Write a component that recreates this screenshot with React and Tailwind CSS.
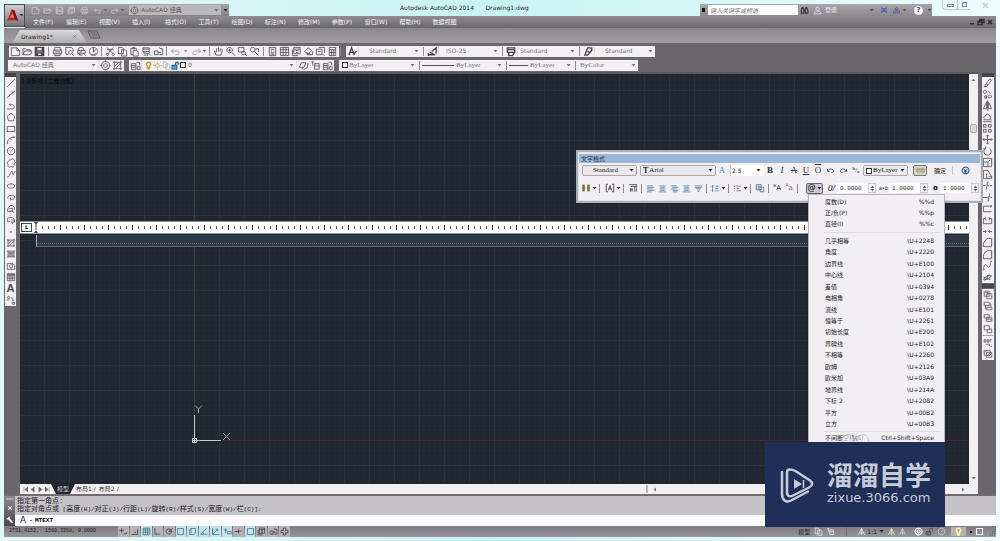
import React, { useState } from 'react';

// Line drawings on a 12 x 12 grid
const GLYPHS = {
  new: 'M1.5 2h6l3 3v5.5h-9zM7.5 2v3h3',
  open: 'M1 9.5V3h3l1 1h4v1.5M1 9.5l2-4h8l-2 4z',
  save: 'M1.5 1.5h9v9h-9zM3 2v3.500h6V2M3.500 10V7.500h5V10M2.200 2v8M9.800 2v8',
  print: 'M3 4.500V1.500h6v3M1.500 4.500h9v4h-9zM3 8.500v2h6v-2M3 6.500h6',
  preview: 'M2 9V1.500h6l2 2V6M2 9h3M7 5a2 2 0 1 0 .1 0M8.500 8.500l2 2',
  publish: 'M2 5a3.500 3.500 0 0 1 7 0M2 5h8v3H2zM4 8v2h3M8 8l2.500 2.500M3.500 6.500h3',
  globe: 'M6 1.500a4.500 4.500 0 1 0 .1 0M6 1.500v5l3-3M3 8.500c2 1 4 1 6 0',
  cut: 'M2 1.500l7 7M9 1.500l-6 7M2.500 8a1.200 1.200 0 1 0 .1 0M9 8a1.200 1.200 0 1 0 .1 0M2 4h7',
  copy: 'M1.500 1.500h4l1.500 1.500v5.500h-5.500zM5 4h4l1.500 1.500v5.500H5z',
  paste: 'M2 2.500h6v2M2 2.500v7h2.500M4 1.500h2v1.500H4zM4.500 5h4l1.500 1.500v4.500h-5.500z',
  brush: 'M2 2h7v4H2zM3 6v2h6V6M2 3.500h7M7 8v3M9 8.500l2 2M3 10h3',
  block: 'M1.500 5.500h4v4h-4zM7 3h3.500v6.500H7M5.500 7h3M7 1.500l1.500 1.500',
  undo: 'M4 3L1.500 5.500 4 8M1.500 5.500H8a2 2 0 0 1 0 4H6',
  redo: 'M8 3l2.500 2.500L8 8M10.500 5.500H4a2 2 0 0 0 0 4h2',
  pan: 'M3 6.500L1.500 5.500l2 4.500h5L10 6V3.500M4 7V2.500M6 6V1.500M8 6V2.500',
  zoom: 'M5 1.500a3 3 0 1 0 .1 0M7.200 6.700l3.500 3.800M3.500 4.500h3M5 3v3',
  zoomWin: 'M1.500 1.500h6v5h-6zM7 5.500a2 2 0 1 0 .1 0M8.500 8.500l2 2',
  zoomPrev: 'M4 1.500a2.500 2.500 0 1 0 .1 0M6 6l4.500 4.500M7 3h3.500v3.500',
  props: 'M2.500 1.500h7v9h-7zM4 3.500h4M4 5.500h1.500M7 5.500h1M4 7.500h4M4 9h4',
  grid: 'M1.500 1.500h9v9h-9zM1.500 4h9M4.500 1.500v9M7.500 1.500v9M1.500 7h9',
  palette: 'M3 1.500h7v7H3zM3 3.500h7M1.500 4v6.500h6M5 5h3M5 7h3',
  sheets: 'M1.500 6l4-4 4 3-4 4zM4 9.500h6.500V6M3 7.500l5 1',
  markup: 'M1.500 3.500h6v6h-6zM4 1.500h6.500v6M3 6h3M8 9l2.500 1.500',
  calc: 'M2.500 1.500h7v9h-7zM2.500 4h7M5 4v6.500M7.200 4v6.500M2.500 7h7',
  help: 'M1.500 1.500h9v9h-9zM4.500 4.500c0-2 3.500-2 3 0L6 6v1M6 8.500v1',
  gear: 'M6 1.500a4.500 4.500 0 1 0 .1 0M6 4a2 2 0 1 0 .1 0M6 .5V2M6 10v1.500M.5 6H2M10 6h1.500',
  layers: 'M1.500 4h5v6.500h-5zM1.500 6h5M1.500 8h5M7 2.500h3.500v3M8 7h3v3.500H8z',
  layerA: 'M1.500 8l2-5h5l-2 5zM4 10l2-1M6 10.500l4-2 1-5',
  layerB: 'M1.500 2h3M3 2v4M5 4h5v6H5zM5 6.500h5',
  text: 'M2 10L5 2l3 8M3 7h4M7 9l3.500-3.500',
  dim: 'M1 9.500h8M3 7l4 1.500M5 6l5-4v6.500M1.500 8v3',
  tableStyle: 'M1.500 2h8v5h-8zM1.500 4h8M3 7v3.500h4L9.500 7',
  leader: 'M2 10l3-8h4.500v3L5 10zM5 5.500l2 1.500',
  line: 'M1.500 10.500l9-9',
  xline: 'M1 10.500L11 2M4 6.500v2.500M7.500 3v2.500',
  pline: 'M1.500 9.500h3M4.500 9.500h3a2.500 2.500 0 0 0 0-5H4M5.500 3L4 4.500 5.500 6',
  polygon: 'M6 1.500l4.500 3.500-1.500 5.500H3L1.500 5z',
  rect: 'M1.500 3h9v6h-9zM1 9h1.500M9.500 3h1.500',
  arc: 'M1.500 10.500c0-5 3.500-8 9-8M1.500 9v2M5 4.500l1.500 1M9.500 1.500v2',
  circle: 'M6 1.500a4.500 4.500 0 1 0 .1 0M5.500 6h1M6.500 5.500L8.500 4',
  cloud: 'M3 4a2 2 0 0 1 3-1.500 2 2 0 0 1 4 1.500 1.800 1.800 0 0 1-.5 3.500 2 2 0 0 1-3.500 2.500A2 2 0 0 1 2.500 8 2.200 2.200 0 0 1 3 4z',
  spline: 'M1 9.500c2 1 3-1 4-4s3-4 3-1 1 3 3-2',
  ellipse: 'M6 3.500c6 0 6 5 0 5s-6-5 0-5M6 2.500v2M1 6h1.500M9.500 6H11',
  earc: 'M2.500 8c-2-4 7-6 8-2 .5 2.500-3 3-5 2.500M5.500 7v3',
  insert: 'M2 9V6l3-4h3l2 2v3M2 9h4M4 5.500h4v3H4M7 8l3 3',
  makeBlock: 'M2 8V4l2-1h4l2 2v3M2 8h3M6 6h4v2.500H6M8 9v2',
  point: 'M5 6h2M6 5v2',
  hatch: 'M2.500 2.500h7v7h-7zM1 2.500h1.500V1M9.500 1v1.500H11M1 9.500h1.500V11M9.500 11V9.500H11M3 7l4-4M4 9l5-5',
  gradient: 'M2.500 2.500h7v7h-7zM1 2.500h1.500M9.500 2.500H11M1 9.500h1.500M9.500 9.500H11M3 4h6M3 5.500h6M3 7h6M3 8.500h6',
  region: 'M1.500 3h5l4 2v5h-9zM6 4.500a2 2 0 1 0 .1 0M8 2v2',
  table: 'M1.500 2h9v8.500h-9zM1.500 4h9M1.500 3h9M4.500 4v6.500M7.500 4v6.500M1.500 6h9M1.500 8h9',
  addSel: 'M3 1.500a1.500 1.500 0 1 0 .1 0M1 6h3M6 3.500c3 0 2.500 2 2.500 3M7 6l1.500 1.500L10 6M7.500 9h3v2h-3z',
  erase: 'M2 10.500h3M3.500 8.500l5-6.500 2 1.500-5 6.500-2.500.5zM4.500 7.500l2 1.500',
  copyObj: 'M3 1.500a1.700 1.700 0 1 0 .1 0M8.500 6.500a1.700 1.700 0 1 0 .1 0M6 3c2 0 3 1 3 2M3 7.500h2v2.500H3z',
  mirror: 'M5 2v7.500H1.500zM7 2v7.500h3.500zM6 .5v11',
  offset: 'M1.500 8.500h9M3 7C1 6.500 2.500 4 4 4.500 4 1.500 8.500 1.500 8 4.500c2 0 2.500 2.500.5 2.500M1.500 10.500h9',
  array: 'M1.500 1.500h3v3h-3zM7 1.500h3v3H7zM1.500 7h3v3h-3zM7 7h3v3H7z',
  move: 'M6 1v10M1 6h10M4.500 2.500L6 1l1.500 1.500M4.500 9.500L6 11l1.500-1.500M2.500 4.500L1 6l1.500 1.500M9.500 4.500L11 6 9.500 7.500',
  rotate: 'M4 2.500a4 4 0 1 0 4.500.3M4 .5v2.500H1.500',
  scale: 'M1.500 1.500h9v9h-9zM1.500 5.500h5v5M7 5l2-2',
  stretch: 'M1.500 1.500h5l4 7v2h-9zM5 5v5.500M7 8.500h4',
  trim: 'M1 6h3M6 6h1.500M9 6h2M6.500 1.500L4.500 10.500',
  extend: 'M1 6h6M8.500 1.500l-2 9M9 6h2',
  breakPt: 'M1.500 9.500v-6h9M1.500 9.500h9M9.500 2l1 1.500-1 1.500',
  breakTwo: 'M1.500 4v5.500h9V4M1.500 4H4M8 4h2.500M4 2.500v3M8 2.500v3',
  join: 'M1 6h3.500M7.500 6H11M3.500 4.500L5 6 3.500 7.500M8.500 4.500L7 6l1.500 1.500',
  chamfer: 'M1.500 10.500V6.500l4-5h5v9z',
  fillet: 'M1.500 10.500V8a7 7 0 0 1 6.500-6.500h2.500v9z',
  blend: 'M1.500 9.500c1-6 3-5 4-3s3 3 4-4M1 10.500h2M9 1.500h2',
  explode: 'M1.500 8l4-4h5l-4 4zM3 9.500L8 2.500M1.500 5.500l8 3',
  front: 'M1.500 1.500h6v6h-6zM4.500 4.500h6v6h-6zM3 3h3v3',
  back: 'M1.500 1.500h6v4h-6zM4.500 7.500h6v3h-6zM3 5.500v4h1.500M7.500 3.500h2v4',
  above: 'M1.500 2h6v4h-6zM4 5h6.500v5H4zM4 7.500h6',
  under: 'M1.500 2h6v5h-6zM5 7v3.500h5.500V6H7.500',
  abc: 'M1.500 2h2v3h-2zM5 2h2v3H5zM8.500 2h2M8.500 2v3M3 7.500h5v2M7 8.500l1.500 1.500M9 10h2',
  hatchBack: 'M1.500 1.500h7v6h-7zM4 4h6.500v6H4zM2 4l3-2.500M5 8l4-4M6.500 9l3.500-3.500',
  columns: 'M2 2v8M4 2v8M8 2v8M10 2v8M2 6h3M7 6h3M3 2v8M9 2v8',
  justify: 'M1.500 1.500h2M8.500 1.500h2M1.500 1.500v9M10.500 1.500v9M1.500 10.500h2M8.500 10.500h2M4 9l2-6 2 6M4.500 7h3',
  para: 'M1.500 2h9M3 4h7M3 6v4.500M5 6v4.500M8 4v6.500M10 2v8.500M5 8H3',
  left: 'M1 2.500h8M2 4.500h9M1 6.500h8M2 8.500h9M1 10.500h7',
  center: 'M2 2.500h8M3 4.500h6M2 6.500h8M3 8.500h6M1 10.500h10',
  right: 'M1 2.500h8M3 4.500h8M1 6.500h8M3 8.500h8M4 10.500h6',
  spread: 'M1 2.500h10M1 4.500h10M3 6h6M4 8h4M5 10h2',
  spacing: 'M2 2v8M1 3.500L2 2l1 1.500M1 8.500L2 10l1-1.500M5 3h6M5 6h5M5 9h6',
  number: 'M2 2v2M1.500 6h1M1.500 9h1M4.500 3h6M4.500 6h4M4.500 9h6',
  field: 'M1.500 2h6v6h-6zM3 4h3M3 6h3M6 5h4.500v5.500H6z',
  undoCurl: 'M2 4v3h3M2 7c3-5 8-3 8 0 0 1.500-2 2-3 1.500',
  redoCurl: 'M10 4v3H7M10 7c-3-5-8-3-8 0 0 1.500 2 2 3 1.500',
  ruler: 'M1 4h10v4H1zM3 4v2M5 4v2M7 4v2M9 4v2',
  more: 'M6 1.500a4.500 4.500 0 1 0 .1 0M3.500 4.500L6 6.500l2.500-2M4.500 7L6 8.500 7.500 7',
  plus: 'M3.500 1.500v6M.5 4.500h6M6 9h4M10 7v2',
  snap: 'M2 10h8V3M5 7h3',
  ortho: 'M2.500 1.500v8h7',
  polar: 'M5 2.500a3.500 3.500 0 1 0 .1 0M5 6l5-4M5 6h5',
  osnap: 'M2 2h8v8H2z',
  osnap3: 'M2 10V4l2-2h6v6l-2 2zM4 2v6',
  angle: 'M10 2L2 9.500h9M5 6.500c1 1 1.500 2 1 3',
  ducs: 'M2 1.500v8.500h9M2 10l7-7M6 3h3v3',
  dyn: 'M1 4h5M3.500 2v6M6 6h5v3H6z',
  lwt: 'M1 6h5M6 3v6M6 5.500h4',
  person: 'M6 1.500a2.200 2.200 0 1 0 .1 0M1.500 10.500c0-5 9-5 9 0z',
  binoc: 'M2 9.500h3v-4L4 2H3L1.500 6zM7 9.500h3.500V6L9 2H8L7 5.500zM5 5.500h2',
  bulb: 'M6 1.500a3 3 0 0 0-1.500 5.500v2h3V7A3 3 0 0 0 6 1.500M4.500 10.500h3',
  sun: 'M6 3.500a2.500 2.500 0 1 0 .1 0M6 .5V2M6 10v1.500M.5 6H2M10 6h1.500M2 2l1 1M9 9l1 1M10 2L9 3M3 9l-1 1',
  lock: 'M1.500 6h6v4.500h-6zM6 6V3.500a2 2 0 0 1 4 0V5M3 8h3',
  cross: 'M2 2l8 8M10 2l-8 8',
  min: 'M2 9h8M2 10h8',
  restore: 'M1.500 5h6v5h-6zM4 5V2h6.500v5h-3M4 3h6M1.500 6h6',
  exchange: 'M2 2l8 8M10 2l-8 8M2 4h8M2 8h8M3 2v8M9 2v8',
  share: 'M6 1.500l2.500 3h-5zM2 6.500h3v3H2zM7 6.500h3v3H7zM6 4v3',
  annot: 'M2 10.500L6 2l4 8.500M6 2v9M3.500 8h5',
  bigPlus: 'M4.500 1.500h3v3h3v3h-3v3h-3v-3h-3v-3h3z',
};

function Icon({ name, className = 'size-[11px]', width = 1 }) {
  return (
    <svg viewBox="0 0 12 12" fill="none" stroke="currentColor" strokeWidth={width} className={`block shrink-0 ${className}`} aria-hidden="true">
      <path d={GLYPHS[name]} />
    </svg>
  );
}

function Caret({ className = 'text-[#77757a]' }) {
  return (
    <svg viewBox="0 0 5 3" className={`block h-[3px] w-[5px] shrink-0 ${className}`} aria-hidden="true">
      <path d="M.5 0h4l-2 2.500z" fill="currentColor" />
    </svg>
  );
}

function Tool({ name, className = 'w-3 text-[#5b595e]', icon, width }) {
  return (
    <button type="button" aria-label={name} className={`flex shrink-0 items-center justify-center ${className}`}>
      <Icon name={name} className={icon} width={width} />
    </button>
  );
}

function Sep() {
  return <span className="mx-[2px] h-[9px] w-px shrink-0 bg-[#8d8b90]" />;
}

function Combo({ label, options, className = '', pad = 'pl-[10px]', caret, children }) {
  return (
    <div className={`relative flex shrink-0 items-center ${className}`}>
      {children}
      <select aria-label={label} className={`h-full w-full min-w-0 appearance-none bg-transparent leading-none outline-none ${pad}`}>
        {options.map((o) => <option key={o}>{o}</option>)}
      </select>
      <span className="pointer-events-none absolute right-[2px]"><Caret className={caret} /></span>
    </div>
  );
}

const MENUS = ['文件(F)', '编辑(E)', '视图(V)', '插入(I)', '格式(O)', '工具(T)', '绘图(D)', '标注(N)', '修改(M)', '参数(P)', '窗口(W)', '帮助(H)', '数据视图'];

const DRAW = ['line', 'xline', 'pline', 'polygon', 'rect', 'arc', 'circle', 'cloud', 'spline', 'ellipse', 'earc', 'insert', 'makeBlock', 'point', 'hatch', 'gradient', 'region', 'table', 'A', 'addSel'];
const MODIFY = ['erase', 'copyObj', 'mirror', 'offset', 'array', 'move', 'rotate', 'scale', 'stretch', 'trim', 'extend', 'breakPt', 'breakTwo', 'join', 'chamfer', 'fillet', 'blend', 'explode'];

const SYMBOLS_TOP = [['度数(D)', '%%d'], ['正/负(P)', '%%p'], ['直径(I)', '%%c']];
const SYMBOLS = [
  ['几乎相等', '\\U+2248'],
  ['角度', '\\U+2220'],
  ['边界线', '\\U+E100'],
  ['中心线', '\\U+2104'],
  ['差值', '\\U+0394'],
  ['电相角', '\\U+0278'],
  ['流线', '\\U+E101'],
  ['恒等于', '\\U+2261'],
  ['初始长度', '\\U+E200'],
  ['界碑线', '\\U+E102'],
  ['不相等', '\\U+2260'],
  ['欧姆', '\\U+2126'],
  ['欧米加', '\\U+03A9'],
  ['地界线', '\\U+214A'],
  ['下标 2', '\\U+2082'],
  ['平方', '\\U+00B2'],
  ['立方', '\\U+00B3'],
];

const PROMPT = [['高度', '(H)/'], ['对正', '(J)/'], ['行距', '(L)/'], ['旋转', '(R)/'], ['样式', '(S)/'], ['宽度', '(W)/'], ['栏', '(C)]:']];

const STATUS = [
  ['plus', false], ['snap', false], ['grid', true], ['ortho', false], ['polar', false],
  ['osnap', true], ['osnap3', true], ['angle', true], ['ducs', true], ['dyn', true],
  ['lwt', false], ['osnap', true], ['palette', false], ['block', false], ['bigPlus', false],
];

function TitleBar() {
  return (
    <header className="flex h-7 shrink-0">
      <button type="button" aria-label="应用程序菜单" className="mt-1 flex h-[23px] w-[21px] shrink-0 items-center border border-[#4a4a4c] bg-linear-to-b from-[#d0cfd2] to-[#77767a]">
        <svg viewBox="0 0 14 16" className="ml-px h-4 w-[14px]" aria-hidden="true">
          <path d="M1 14L6 1l3 1 4 11-4-1-3 1-2-1z" fill="#c0251f" />
          <path d="M6 1l3 1 4 11-3-1z" fill="#7d100f" />
          <path d="M4 10l3-5 1.500 5z" fill="#e8807a" />
        </svg>
        <Caret className="text-[#333]" />
      </button>
      <div className="flex min-w-0 flex-1 flex-col">
        <div className="flex h-4 shrink-0 items-start">
          <div className="mt-1 flex h-3 w-[204px] shrink-0 items-center bg-linear-to-b from-[#a5a3a7] to-[#848286] pl-1 text-[#c9c8cc]">
            <Tool name="new" className="w-3" icon="size-[9px]" />
            <Tool name="open" className="w-3" icon="size-[9px]" />
            <Tool name="save" className="w-3" icon="size-[9px]" />
            <Tool name="palette" className="w-3" icon="size-[9px]" />
            <Tool name="print" className="w-[14px]" icon="size-[9px]" />
            <Tool name="undo" className="w-3" icon="size-[9px]" />
            <Caret className="text-[#68666a]" />
            <Tool name="redo" className="w-3" icon="size-[9px]" />
            <Caret className="text-[#68666a]" />
            <Combo label="工作空间" options={['AutoCAD 经典']} pad="pl-[2px]" className="ml-[4px] h-[10px] w-[92px] bg-[#bab8bc] pl-px text-[#5b595d]">
              <Icon name="gear" className="size-[9px]" />
            </Combo>
            <span className="ml-[2px]"><Caret className="text-[#222]" /></span>
          </div>
          <h1 className="flex-1 pt-1 pl-[171px] text-[6px] leading-[8px] font-normal whitespace-pre text-[#1b2a2c]">Autodesk AutoCAD 2014      Drawing1.dwg</h1>
          <div className="mt-1 flex h-3 w-[232px] shrink-0 items-center bg-linear-to-b from-[#a9a7ab] to-[#8b898d] pl-[2px] text-[#4d4b50]">
            <span className="mr-[3px] h-[4px] w-[3px] bg-[#111]" />
            <input aria-label="搜索" placeholder="键入关键字或短语" className="h-[10px] w-[92px] bg-[#fbfafb] px-[2px] text-[6px] italic outline-none placeholder:text-[#77757a]" />
            <Tool name="binoc" className="ml-px w-3 text-[#39373b]" icon="size-[9px]" width={1.5} />
            <Tool name="person" className="w-[14px] text-[#eeedf0]" icon="size-[9px]" />
            <a href="#login" className="shrink-0 text-[6px] leading-none whitespace-nowrap text-[#e9e8eb]">登录</a>
            <span className="ml-[32px]"><Caret className="text-[#555358]" /></span>
            <Tool name="exchange" className="ml-1 w-3 text-[#4353a0]" icon="size-[8px]" />
            <Tool name="share" className="w-3 text-[#4d5c9c]" icon="size-[9px]" />
            <Caret className="text-[#555358]" />
            <span className="ml-[7px] flex size-[9px] shrink-0 items-center justify-center rounded-full bg-[#f4f6fb] text-[7px] leading-none font-bold text-[#3a4b78]">?</span>
            <span className="ml-1"><Caret className="text-[#555358]" /></span>
          </div>
          <div className="ml-[10px] flex h-[10px] w-[54px] shrink-0 items-center rounded-b-sm text-[#8997a0]">
            <button type="button" aria-label="最小化" className="flex h-full w-4 items-end justify-center rounded-bl-sm border border-t-0 border-[#b4cdd1] pb-[2px]"><span className="h-[3px] w-[7px] border border-[#7b8a92]" /></button>
            <button type="button" aria-label="最大化" className="flex h-full w-3 items-center justify-center border-b border-[#b4cdd1]"><span className="size-[5px] border border-[#7b8a92]" /></button>
            <button type="button" aria-label="关闭" className="ml-3 text-[#c2d6ea]"><Icon name="cross" className="size-[7px]" width={3} /></button>
          </div>
        </div>
        <nav className="flex h-3 min-w-0 items-center gap-[12px] bg-linear-to-b from-[#8f8d91] to-[#6a686c] pr-[2px] pl-[8px]">
          {MENUS.map((m) => (
            <a key={m} href="#menu" className="min-w-[21px] shrink-0 text-[6px] leading-none text-[#f6f5f8]">{m}</a>
          ))}
          <div className="ml-auto flex text-[#2f2d31]">
            <Tool name="min" className="w-2" icon="size-[6px]" width={2} />
            <Tool name="restore" className="w-[10px]" icon="size-[8px]" width={2} />
            <Tool name="cross" className="w-2" icon="size-[6px]" width={3} />
          </div>
        </nav>
      </div>
    </header>
  );
}

function FileTabs() {
  return (
    <div className="flex h-[15px] shrink-0 items-end bg-linear-to-b from-[#8b898d] to-[#a09ea2] pl-2">
      <div className="flex h-[13px] w-[75px] items-center justify-between bg-linear-to-b from-[#d9d8db] to-[#b0aeb2] pr-[10px] pl-[9px] [clip-path:polygon(8px_0,67px_0,100%_100%,0_100%)]">
        <span className="text-[6px] leading-none text-[#1e1d20]">Drawing1*</span>
        <button type="button" aria-label="关闭图形" className="text-[#8a888c]"><Icon name="cross" className="size-[5px]" width={2} /></button>
      </div>
      <svg viewBox="0 0 14 9" className="mb-1 h-[9px] w-[14px]" aria-hidden="true">
        <path d="M1 1h9l3 7H4z" fill="#89878b" stroke="#5f5d61" />
        <path d="M4 3h4M5 5h5" stroke="#6a686c" />
      </svg>
    </div>
  );
}

function Toolbars() {
  const bar = 'flex shrink-0 items-center bg-[#f2f0f3] text-[6px] text-[#77757a]';
  const thick = 'w-3 text-[#48464b]';
  return (
    <div className="shrink-0 bg-[#6a686b] pt-px text-[6px]">
      <div className="flex h-[14px] items-center gap-[7px] pl-[5px]">
        <div className={`${bar} h-[11px] w-[330px]`}>
          <Tool name="new" /><Tool name="open" /><Tool name="save" width={1.5} className="w-[13px] text-[#48464b]" /><Sep />
          <Tool name="print" /><Tool name="preview" /><Tool name="publish" /><Tool name="globe" /><Sep />
          <Tool name="cut" /><Tool name="copy" /><Tool name="paste" /><Tool name="brush" /><Tool name="block" /><Sep />
          <Tool name="undo" className="w-3 text-[#a09ea3]" /><Caret className="mx-[2px] text-[#a09ea3]" />
          <Tool name="redo" className="w-3 text-[#a09ea3]" /><Caret className="text-[#777]" /><Sep />
          <Tool name="pan" /><Tool name="zoom" /><Tool name="zoomWin" /><Tool name="zoomPrev" className="w-[13px] text-[#5b595e]" /><Sep />
          <Tool name="props" /><Tool name="grid" /><Tool name="palette" /><Tool name="sheets" /><Tool name="markup" /><Tool name="calc" /><Sep />
          <Tool name="help" />
        </div>
        <div className={`${bar} h-[11px]`}>
          <Tool name="text" width={1.5} className={thick} />
          <Combo label="文字样式" options={['Standard']} className="h-full w-[63px] border-l border-[#dcdadd]" />
          <Sep />
          <Tool name="dim" width={1.5} className={thick} />
          <Combo label="标注样式" options={['ISO-25']} pad="pl-[7px]" className="h-full w-[62px] border-l border-[#dcdadd]" />
          <Sep />
          <Tool name="tableStyle" width={1.5} className={thick} />
          <Combo label="表格样式" options={['Standard']} pad="pl-[2px]" className="h-full w-[60px] border-l border-[#dcdadd]" />
          <Sep />
          <Tool name="leader" width={1.5} className={thick} />
          <Combo label="多重引线样式" options={['Standard']} className="h-full w-[61px] border-l border-[#dcdadd]" />
        </div>
      </div>
      <div className="flex h-[14px] items-center gap-[5px] pl-1">
        <div className={`${bar} h-[11px] w-[116px] pr-[2px]`}>
          <Combo label="工作空间列表" options={['AutoCAD 经典']} pad="pl-[5px]" className="h-full w-[91px] border-r border-[#dcdadd]" />
          <Tool name="gear" /><Tool name="hatch" />
        </div>
        <div className={`${bar} h-[11px] w-[205px]`}>
          <Tool name="layers" />
          <Combo label="图层" options={['0']} pad="pl-[2px]" className="h-full w-[156px] border-x border-[#dcdadd] pl-[2px] text-[#555]">
            <Icon name="bulb" className="size-[9px] text-[#c49f2b]" width={2} />
            <Icon name="sun" className="size-[9px] text-[#b39a4e]" />
            <Icon name="copy" className="size-[9px] text-[#b3b1b5]" />
            <Icon name="lock" className="size-[9px] text-[#2f6f9e]" width={2} />
            <span className="size-[6px] shrink-0 border border-[#333]" />
          </Combo>
          <Tool name="layerA" /><Tool name="layerB" /><Tool name="layers" />
        </div>
        <div className={`${bar} h-[11px] font-['Liberation_Serif',serif] text-[7px]`}>
          <Combo label="颜色" options={['ByLayer']} pad="pl-px" className="h-full w-[78px] pl-[3px]">
            <span className="size-[6px] shrink-0 border border-[#333]" />
          </Combo>
          <Sep />
          <Combo label="线型" options={['ByLayer']} pad="pl-[2px]" className="h-full w-[82px]">
            <span className="h-px w-8 shrink-0 bg-[#555]" />
          </Combo>
          <Sep />
          <Combo label="线宽" options={['ByLayer']} pad="pl-[2px]" className="h-full w-16">
            <span className="h-px w-[19px] shrink-0 bg-[#555]" />
          </Combo>
          <Sep />
          <Combo label="打印样式" options={['ByColor']} pad="pl-[2px]" className="h-full w-[60px]" />
        </div>
      </div>
    </div>
  );
}

function Canvas() {
  return (
    <div className="relative min-w-0 flex-1 overflow-hidden bg-[#212631]">
      <svg className="absolute inset-0 size-full" aria-hidden="true">
        <defs>
          <pattern id="grid" x="24" y="16" width="25" height="25" patternUnits="userSpaceOnUse">
            <path d="M5.500 0v25M10.500 0v25M15.500 0v25M20.500 0v25M0 5.500h25M0 10.500h25M0 15.500h25M0 20.500h25" stroke="#242a35" />
            <path d="M.5 0v25M0 .5h25" stroke="#29323c" />
          </pattern>
        </defs>
        <rect width="100%" height="100%" fill="url(#grid)" />
        <path d="M174.500 0v342" stroke="#2b4a3e" />
        <path d="M200 366.500h2000" stroke="#432832" />
        <g stroke="#c3c6ca" fill="none">
          <path d="M174.500 341v28M172 366.500h29" />
          <rect x="172.500" y="364.500" width="4" height="4" />
          <path d="M175 331.500l3.500 3.500 3.500-3.500M178.500 335v4M203 359l7 7M210 359l-7 7" stroke="#a9adb3" />
        </g>
      </svg>
      <p className="absolute top-[3px] left-[2px] text-[6px] leading-[8px] text-[#05070c]">[-][俯视][二维线框]</p>
      <div className="absolute inset-x-0 top-[147px] flex h-[13px] border-y border-[#8e9398] bg-white">
        <span className="m-px flex w-[11px] shrink-0 items-center justify-center border border-[#444] text-[5px] leading-none font-bold text-black">L</span>
        <svg viewBox="0 0 4 11" className="ml-px h-[11px] w-1 shrink-0" aria-hidden="true">
          <path d="M0 0h4L2 3zM0 11h4L2 8zM1.500 2h1v7h-1z" fill="#444" />
        </svg>
        <svg className="h-[11px] min-w-0 flex-1" aria-hidden="true">
          <defs>
            <pattern id="ticks" x="22" width="24" height="11" patternUnits="userSpaceOnUse">
              <path d="M.5 3v5" stroke="#222" />
              <path d="M6.500 4v3M12.500 4v3M18.500 4v3" stroke="#555" />
            </pattern>
          </defs>
          <rect width="100%" height="11" fill="url(#ticks)" />
        </svg>
      </div>
      <div className="absolute top-[161px] right-0 left-4 h-3 border-b border-l border-[#5d6268] border-l-[#a9adb3] bg-[#2c3845]">
        <div className="h-[9px] border-b border-dotted border-[#5f6a75]" />
      </div>
    </div>
  );
}

function Stepper({ label, value }) {
  return (
    <span className="flex items-center">
      <input aria-label={label} defaultValue={value} className="h-[10px] w-[31px] bg-white pl-[3px] font-['Liberation_Mono',monospace] text-[6px] text-[#222] outline-none" />
      <span className="flex h-[10px] w-2 flex-col items-center justify-around border border-[#c9c7cb] bg-[#f7f6f8]">
        <span className="rotate-180"><Caret className="text-[#666]" /></span>
        <Caret className="text-[#666]" />
      </span>
    </span>
  );
}

function SymbolRow({ item }) {
  return (
    <button type="button" className="flex items-center justify-between pr-[10px] pl-4 text-[6px] leading-none text-[#1c1b1e] hover:bg-[#d5e3f5]">
      <span>{item[0]}</span>
      <span>{item[1]}</span>
    </button>
  );
}

function SymbolMenu() {
  return (
    <div className="absolute top-[42px] left-[230px] w-[137px] border border-[#b9b7bb] bg-[#f1eff3] pt-px shadow-sm">
      <div className="grid h-[34px] auto-rows-fr">
        {SYMBOLS_TOP.map((s) => <SymbolRow key={s[1]} item={s} />)}
      </div>
      <hr className="my-[2px] mr-1 ml-[15px] border-[#dddbdf]" />
      <div className="grid h-[195px] auto-rows-fr">
        {SYMBOLS.map((s) => <SymbolRow key={s[1]} item={s} />)}
      </div>
      <hr className="mt-px mr-1 ml-[15px] border-[#dddbdf]" />
      <div className="relative grid h-3">
        <SymbolRow item={['不间断空格(S)', 'Ctrl+Shift+Space']} />
        <svg viewBox="0 0 30 12" className="pointer-events-none absolute top-0 left-8 h-3 w-[30px]" fill="#f6f5f8" fillOpacity=".6" stroke="#c5c3c8" aria-hidden="true">
          <circle cx="7" cy="8" r="5.500" />
          <circle cx="22" cy="8" r="5.500" />
        </svg>
      </div>
    </div>
  );
}

function TextFormat() {
  const [open, setOpen] = useState(true);
  const key = 'flex h-[11px] w-[12px] shrink-0 items-center justify-center font-["Liberation_Serif",serif] text-[9px] leading-none text-[#333]';
  const align = 'w-[12px] text-[#4a7ea6]';
  return (
    <section aria-label="文字格式" className="absolute top-[78px] right-[13px] z-10 h-[53px] w-[407px] border-2 border-[#a9b0b6] bg-[#f1eff3] shadow-[inset_0_0_0_1px_#dfe3e6]">
      <h2 className="mx-px mt-[2px] h-[9px] bg-[#9ab7d8] pl-[2px] text-[6px] leading-[9px] font-normal text-[#1d2a3a]">文字格式</h2>
      <div className="flex h-[15px] items-center pl-1 font-['Liberation_Serif',serif] text-[7px] text-[#222]">
        <Combo label="样式" options={['Standard']} caret="text-[#222]" className="h-[11px] w-[55px] rounded-xs border border-[#aaa8ac] bg-[#ebe9ed]" />
        <Combo label="字体" options={['Arial']} pad="pl-px" caret="text-[#222]" className="ml-[3px] h-[11px] w-[76px] rounded-xs border border-[#aaa8ac] bg-[#ebe9ed] pl-[2px]">
          <span className="text-[8px] leading-none font-bold">T</span>
        </Combo>
        <span className="w-3 text-center text-[8px] leading-none text-[#3f7fae]">A</span>
        <div className="ml-[2px] flex h-[11px] w-[34px] items-center border-l border-[#c9c7cb] bg-white pr-[3px]">
          <input aria-label="文字高度" defaultValue="2.5" className="w-full min-w-0 px-px font-['DejaVu_Sans',sans-serif] text-[6px] outline-none" />
          <Caret className="text-[#222]" />
        </div>
        <button type="button" className={`${key} font-bold`}>B</button>
        <button type="button" className={`${key} italic`}>I</button>
        <button type="button" className={`${key} line-through`}>A</button>
        <button type="button" className={`${key} underline`}>U</button>
        <button type="button" className={`${key} overline`}>O</button>
        <Tool name="undoCurl" className="w-[13px] text-[#333]" icon="size-[9px]" />
        <Tool name="redoCurl" className="w-[13px] text-[#333]" icon="size-[9px]" />
        <button type="button" className="w-3 text-[7px] leading-none font-bold text-[#555]"><sup className="text-[5px]">b</sup>/<sub className="text-[5px]">a</sub></button>
        <Combo label="文字颜色" options={['ByLayer']} pad="pl-px" caret="text-[#222]" className="ml-px h-[11px] w-[45px] rounded-xs border border-[#aaa8ac] bg-[#ebe9ed] pl-[2px]">
          <span className="size-[6px] shrink-0 border border-[#333] bg-white" />
        </Combo>
        <Tool name="ruler" className="ml-[5px] h-[11px] w-[14px] rounded-xs border border-[#77757a] bg-[#d9d4c8] text-[#8b7b4b]" icon="size-[9px]" />
        <button type="button" className="ml-[7px] font-['Noto_Sans_CJK_SC',sans-serif] text-[6px] leading-none">确定</button>
        <span className="ml-[6px] h-[9px] w-px bg-[#c9c7cb]" />
        <Tool name="more" className="ml-[6px] w-3 text-[#2f5f88]" icon="size-[9px]" width={1.5} />
      </div>
      <div className="flex h-5 items-center pl-[2px]">
        <Tool name="columns" className="w-[12px] text-[#6a6532]" icon="size-[10px]" /><Caret className="text-[#222]" /><Sep />
        <Tool name="justify" className="ml-px w-[13px] text-[#333]" icon="size-[10px]" /><Caret className="text-[#222]" /><Sep />
        <Tool name="para" className="w-[13px] text-[#444]" icon="size-[10px]" /><Sep />
        <Tool name="left" className={align} icon="size-[9px]" />
        <Tool name="center" className={align} icon="size-[9px]" />
        <Tool name="right" className={align} icon="size-[9px]" />
        <Tool name="center" className={align} icon="size-[9px]" />
        <Tool name="spread" className={align} icon="size-[9px]" /><Sep />
        <Tool name="spacing" className={align} icon="size-[9px]" /><Caret className="text-[#222]" /><Sep />
        <Tool name="number" className="w-[12px] text-[#5f5d62]" icon="size-[9px]" /><Caret className="text-[#222]" /><Sep />
        <Tool name="field" className="w-[13px] text-[#4c6f8d]" icon="size-[10px]" /><Sep />
        <button type="button" className="w-3 text-[7px] leading-none text-[#333]"><sup className="text-[5px]">a</sup>A</button>
        <button type="button" className="w-3 text-[7px] leading-none text-[#777]"><sup className="text-[5px]">A</sup>a</button>
        <Sep />
        <button type="button" aria-label="符号" aria-expanded={open} onClick={() => setOpen(!open)} className="ml-[6px] flex h-[11px] w-[17px] shrink-0 items-center justify-center gap-px rounded-xs border border-[#66646a] bg-[#c9c7cb] text-[8px] leading-none">
          @<Caret className="text-[#111]" />
        </button>
        <span className="ml-[5px] w-[9px] font-['Liberation_Serif',serif] text-[9px] leading-none italic">0/</span>
        <Stepper label="倾斜角度" value="0.0000" />
        <span className="ml-[3px] w-[10px] text-[5px] leading-none">a•b</span>
        <Stepper label="追踪" value="1.0000" />
        <span className="ml-[3px] w-[9px] text-center text-[7px] leading-none font-bold">o</span>
        <Stepper label="宽度因子" value="1.0000" />
      </div>
      {open && <SymbolMenu />}
    </section>
  );
}

function LayoutTabs() {
  return (
    <div className="flex h-[10px] shrink-0 items-center bg-[#f1eff2] text-[6px] leading-none text-[#333]">
      <div className="flex w-[31px] items-center justify-around pl-[2px]">
        {['M1 0v6M6 0L2 3l4 3z', 'M5 0L1 3l4 3z', 'M1 0l4 3-4 3z', 'M5 0v6M0 0l4 3-4 3z'].map((d) => (
          <button key={d} type="button" aria-label="切换布局" className="block">
            <svg viewBox="0 0 6 6" className="block size-[5px]"><path d={d} fill="#666" stroke="#666" strokeWidth=".5" /></svg>
          </button>
        ))}
      </div>
      <button type="button" className="flex h-full w-[24px] items-center justify-center bg-[#212631] leading-none text-[#c3c5ca] [clip-path:polygon(0_0,100%_0,19px_100%,5px_100%)]">模型</button>
      <button type="button" className="px-px leading-none">布局1</button><span className="px-px">/</span>
      <button type="button" className="ml-px px-px leading-none">布局2</button><span className="px-px">/</span>
      <div className="ml-auto flex w-[332px] items-center justify-between pr-3">
        <span className="flex items-center gap-1"><span className="h-[8px] w-[2px] bg-[#b7b5b9]" /><span className="rotate-90"><Caret /></span></span>
        <span className="-rotate-90"><Caret /></span>
      </div>
    </div>
  );
}

function RightDock() {
  const icon = 'text-[#5f5d62]';
  return (
    <aside className="flex w-[18px] shrink-0 flex-col items-center bg-[#6a686b] pl-px">
      <span className="mt-px h-1 w-3 bg-[#454447]" />
      <div className="grid h-[206px] w-3 auto-rows-fr bg-[#f2f0f3]">
        {MODIFY.map((n) => <Tool key={n} name={n} className={icon} />)}
      </div>
      <span className="my-px h-1 w-3 bg-[#454447]" />
      <div className="flex h-[71px] w-3 flex-col justify-around bg-[#f2f0f3]">
        {['front', 'back', 'above', 'under'].map((n) => <Tool key={n} name={n} className={icon} icon="size-[10px]" />)}
        <span className="mx-px h-px bg-[#aaa8ac]" />
        {['abc', 'hatchBack'].map((n) => <Tool key={n} name={n} className={icon} icon="size-[10px]" />)}
      </div>
    </aside>
  );
}

function CommandLine() {
  return (
    <div className="flex h-8 shrink-0 border-t-2 border-[#6f6d71] bg-[#c4c2c6]">
      <div className="flex w-[11px] shrink-0 flex-col items-center justify-between bg-linear-to-b from-[#8b898d] to-[#4b494d] py-[2px] text-white">
        <span className="h-[2px] w-[7px] bg-[#a9a7ab]" />
        <Icon name="cross" className="size-[6px]" width={2} />
        <svg viewBox="0 0 12 12" className="size-2" aria-hidden="true"><path d="M4 4l6 6.500" stroke="#fff" strokeWidth="2.500" /><path d="M1 4a3 3 0 0 0 4-3" fill="none" stroke="#fff" strokeWidth="2" /></svg>
      </div>
      <div className="min-w-0 flex-1 font-['Liberation_Mono','Noto_Sans_CJK_SC',monospace]">
        <div className="h-[19px] pt-px pl-[2px] text-[7px] leading-[8px] text-[#1c1b1e]">
          <p>指定第一角点:</p>
          <p>指定对角点或<span className="text-[6px]"> [</span>
            {PROMPT.map(([name, k]) => <React.Fragment key={k}>{name}<span className="text-[6px]">{k}</span></React.Fragment>)}
          </p>
        </div>
        <label className="flex h-[11px] items-center bg-[#fbfafc] pl-[5px]">
          <span className="w-[9px] font-['DejaVu_Sans',sans-serif] text-[9px] leading-none text-[#333]">A</span>
          <span className="w-[6px] text-[7px] leading-none">-</span>
          <input aria-label="命令" defaultValue="MTEXT" className="h-[9px] min-w-0 flex-1 text-[6px] font-bold text-black outline-none" />
        </label>
      </div>
    </div>
  );
}

function StatusBar() {
  return (
    <footer className="flex h-[11px] shrink-0 items-center bg-linear-to-b from-[#7d7b7f] to-[#98969a] pl-[5px] text-[#222]">
      <span className="w-[109px] font-['Liberation_Mono',monospace] text-[5px] leading-none whitespace-pre">2731.4152,  1560.3368, 0.0000</span>
      <div className="grid h-full w-[172px] grid-cols-15 gap-px">
        {STATUS.map(([n, on], i) => (
          <Tool key={i} name={n} icon="size-[9px]" className={on ? 'bg-[#bfe3ef] text-[#4a6b7b]' : 'bg-[#b3b1b5] text-[#3c3a3e]'} />
        ))}
      </div>
      <div className="ml-auto flex h-full items-center">
        <button type="button" className="mr-[2px] text-[6px] leading-none">模型</button>
        <Tool name="copy" className="w-3 text-[#eee]" icon="size-[9px]" />
        <Tool name="layerB" className="w-3 text-[#eee]" icon="size-[9px]" />
        <span className="mr-2 ml-[10px] h-[9px] w-px bg-[#6f6d71]" />
        <Tool name="annot" className="w-3 text-[#eee]" icon="size-[9px]" />
        <span className="text-[6px] leading-none text-[#222]">1:1</span>
        <span className="mx-[2px]"><Caret className="text-[#111]" /></span>
        <Tool name="annot" className="w-[11px] text-[#f3e9bd]" icon="size-[9px]" />
        <Tool name="annot" className="w-[11px] text-[#cfcdd1]" icon="size-[9px]" />
        <Tool name="gear" className="ml-1 w-3 text-[#f4f3f6]" icon="size-[9px]" width={1.500} />
        <Tool name="lock" className="w-[11px] text-[#3c3a3e]" icon="size-[9px]" />
        <Tool name="circle" className="w-3 text-[#d9d7db]" icon="size-[9px]" />
        <Tool name="bulb" className="mx-1 h-[9px] w-[15px] bg-[#b8b4a6] text-[#fff3b8]" icon="size-[9px]" width={2} />
        <span className="mr-[2px] size-[2px] bg-[#111]" />
        <Tool name="osnap" className="w-[10px] text-white" icon="size-[9px]" width={1.500} />
        <svg viewBox="0 0 8 8" className="ml-1 size-2 text-[#5f5d61]" aria-hidden="true">
          <path d="M7 1v6H1M5 3v2H3" fill="none" stroke="currentColor" strokeDasharray="1 1" />
        </svg>
      </div>
    </footer>
  );
}

function Watermark() {
  return (
    <div className="absolute right-[55px] bottom-[14px] z-20 flex h-[85px] w-[180px] items-center gap-3 bg-[#1f2f57] pl-[15px] text-[#c5cbd7]">
      <svg viewBox="0 0 35 36" fill="none" stroke="currentColor" className="h-9 w-[35px] shrink-0" aria-hidden="true">
        <path d="M2 5v22c0 6 4 9 9 6.500l17-9" strokeWidth="2.500" strokeLinecap="round" />
        <path d="M9.500 2.500c-2 0-2.500 1-2.500 3v20c0 4 3 4.500 6 3l16-8c4-2 4-5 1-7L15.500 4c-2-1-4-1.500-6-1.500z" strokeWidth="2.500" />
        <path d="M14 12l8 5-8 5z" fill="currentColor" stroke="none" />
        <path d="M23.500 13v8" strokeWidth="1.500" />
      </svg>
      <div>
        <p className="font-['Liberation_Sans','Noto_Sans_CJK_SC',sans-serif] text-[26px] leading-[26px] font-bold whitespace-nowrap">溜溜自学</p>
        <p className="font-['DejaVu_Sans',sans-serif] text-[13px] leading-[18px]">zixue.3066.com</p>
      </div>
    </div>
  );
}

export default function App() {
  return (
    <div className="relative flex h-screen flex-col overflow-hidden bg-linear-to-r from-[#e6f7f9] via-[#c8f3f3] to-[#eefcfd] px-1 pb-1 font-['DejaVu_Sans','Noto_Sans_CJK_SC',sans-serif] text-[6px]">
      <TitleBar />
      <FileTabs />
      <Toolbars />
      <main className="relative flex min-h-0 flex-1">
        <aside className="flex w-4 shrink-0 flex-col bg-[#6a686b] pl-px">
          <span className="mt-px h-1 w-[11px] bg-[#454447]" />
          <div className="grid h-[229px] w-[11px] auto-rows-fr bg-[#f2f0f3]">
            {DRAW.map((n) => n === 'A'
              ? <button key={n} type="button" className="font-['Liberation_Sans',sans-serif] text-[11px] leading-none font-bold text-[#48464b]">A</button>
              : <Tool key={n} name={n} className="text-[#5f5d62]" icon="size-[10px]" />)}
          </div>
        </aside>
        <div className="flex min-w-0 flex-1 flex-col border-t-2 border-[#5b595d]">
          <div className="flex min-h-0 flex-1">
            <Canvas />
            <div className="flex w-[9px] shrink-0 flex-col items-center bg-[#f1eff2] py-1">
              <span className="rotate-180"><Caret /></span>
              <span className="mt-[43px] h-[9px] w-[7px] rounded-xs border border-[#aaa8ac] bg-[#dddbdf]" />
              <span className="mt-auto"><Caret /></span>
            </div>
          </div>
          <LayoutTabs />
        </div>
        <RightDock />
        <TextFormat />
      </main>
      <CommandLine />
      <StatusBar />
      <Watermark />
    </div>
  );
}
